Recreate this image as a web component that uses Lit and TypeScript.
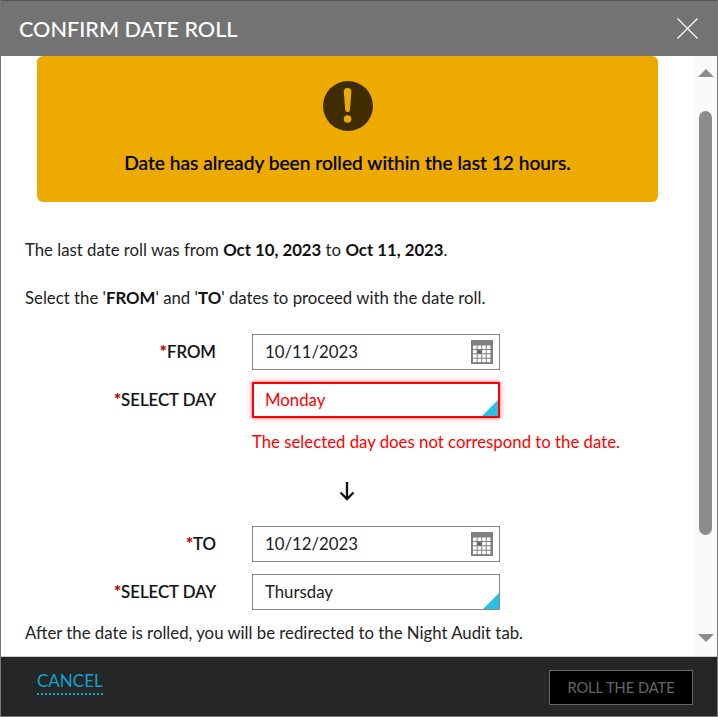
import { LitElement, html, css, svg } from "lit";
import { customElement } from "lit/decorators.js";

const calendar = html`<svg class="cal" width="22" height="24" viewBox="0 0 22 24">
  <rect width="22" height="24" fill="#808080"></rect>
  ${[0, 1, 2, 3].map((r) =>
    [0, 1, 2, 3].map(
      (c) =>
        svg`<rect x=${2 + c * 4.6} y=${5.5 + r * 4.4} width="3.6" height="3.4" fill=${r === 1 && c === 1 ? "#666" : "#fff"}></rect>`
    )
  )}
</svg>`;

@customElement("app-root")
export class AppRoot extends LitElement {
  static styles = css`
    :host {
      display: flex;
      flex-direction: column;
      width: 718px;
      height: 717px;
      box-sizing: border-box;
      font-family: Lato, sans-serif;
      font-size: 16.78px;
      color: #222;
      background: #fff;
      border-left: 1px solid #777;
      border-right: 1px solid #777;
      border-bottom: 1px solid #777;
      overflow: hidden;
    }
    .head {
      flex: none;
      height: 56px;
      box-sizing: border-box;
      border-top: 1px solid #555;
      background: #737373;
      color: #fff;
      display: flex;
      align-items: center;
      justify-content: space-between;
      padding: 0 19px 0 18px;
      font-size: 21.6px;
      font-weight: 500;
    }
    .head svg { display: block; }
    .main { flex: 1; display: flex; min-height: 0; }
    .content { flex: 1; padding: 0 0 0 24px; min-width: 0; }
    .banner {
      width: 621px;
      height: 146px;
      margin-left: 12px;
      box-sizing: border-box;
      background: #edaa00;
      border-radius: 6px;
      display: flex;
      flex-direction: column;
      align-items: center;
      padding-top: 25px;
      color: #000;
      font-size: 19.15px;
      font-weight: 500;
      -webkit-text-stroke: 0.2px #000;
    }
    .banner svg { display: block; margin-bottom: 20px; }
    p { margin: 0; line-height: 20px; white-space: nowrap; }
    .p1 { margin-top: 38px; }
    .p2 { margin-top: 28px; }
    b { font-weight: 700; color: #111; }
    .form {
      display: grid;
      grid-template-columns: 191px 248px;
      column-gap: 36px;
      row-gap: 12px;
      margin-top: 26px;
      align-items: center;
    }
    .form.to { margin-top: 25px; }
    .lbl { text-align: right; font-weight: 500; color: #111; padding-bottom: 1px; white-space: nowrap; -webkit-text-stroke: 0.2px #111; }
    .lbl i { color: #f00; font-style: normal; font-weight: 700; }
    .box {
      position: relative;
      height: 36px;
      box-sizing: border-box;
      border: 1px solid #8a8a8a;
      padding: 0 0 1px 12px;
      display: flex;
      align-items: center;
      color: #222;
      background: #fff;
    }
    .box.err { border: 2px solid #f00; padding-left: 11px; color: #f00; box-shadow: 0 0 5px rgba(255, 0, 0, 0.6); }
    .cal { position: absolute; right: 6px; top: 5px; }
    .corner {
      position: absolute;
      right: 0;
      bottom: 0;
      width: 0;
      height: 0;
      border-style: solid;
      border-width: 0 0 16px 16px;
      border-color: transparent transparent #29c0e4 transparent;
    }
    .msg { grid-column: 2; color: #f00; margin-top: 2px; line-height: 20px; white-space: nowrap; }
    .arrow { display: flex; justify-content: flex-start; margin: 29px 0 0 312px; height: 20px; }
    .p3 { margin-top: 13px; }
    .bar { flex: none; width: 23px; background: #fafafa; display: flex; flex-direction: column; align-items: center; box-sizing: border-box; }
    .up, .down { flex: none; width: 0; height: 0; border-left: 8px solid transparent; border-right: 8px solid transparent; }
    .up { border-bottom: 8px solid #8c8c8c; margin-top: 13px; }
    .thumb { flex: none; width: 13px; height: 424px; margin-top: 34px; background: #8c8c8c; border-radius: 7px; }
    .down { border-top: 8px solid #8c8c8c; margin-top: 99px; }
    .foot {
      flex: none;
      height: 60px;
      box-sizing: border-box;
      background: #262626;
      border-top: 1px solid #ccc;
      display: flex;
      align-items: center;
      justify-content: space-between;
      padding: 0 24px 0 36px;
    }
    .cancel {
      color: #0ba5cc;
      font-size: 17px;
      line-height: 20px;
      border-bottom: 2px dotted #0ba5cc;
      padding-bottom: 2px;
      margin-top: -8px;
    }
    .roll {
      width: 144px;
      height: 35px;
      box-sizing: border-box;
      background: #000;
      border: 1px solid #666;
      color: #666;
      font-size: 14.6px;
      display: flex;
      align-items: center;
      justify-content: center;
      margin-top: 2px;
    }
  `;

  render() {
    return html`
      <div class="head">
        <span>CONFIRM DATE ROLL</span>
        <svg width="21" height="21" viewBox="0 0 21 21"><path d="M.5.5l20 20M20.5.5l-20 20" stroke="#fff" stroke-width="1.2" fill="none"></path></svg>
      </div>
      <div class="main">
        <div class="content">
          <div class="banner">
            <svg width="50" height="50" viewBox="0 0 50 50">
              <circle cx="25" cy="25" r="25" fill="#3f2d00"></circle>
              <path d="M20.8 10.8a3.8 3.8 0 0 1 7.6 0l-1.4 18a2.4 2.4 0 0 1-4.8 0z" fill="#edaa00"></path>
              <circle cx="24.6" cy="38" r="3.8" fill="#edaa00"></circle>
            </svg>
            <span>Date has already been rolled within the last 12 hours.</span>
          </div>
          <p class="p1">The last date roll was from <b>Oct 10, 2023</b> to <b>Oct 11, 2023</b>.</p>
          <p class="p2">Select the '<b>FROM</b>' and '<b>TO</b>' dates to proceed with the date roll.</p>
          <div class="form">
            <div class="lbl"><i>*</i>FROM</div>
            <div class="box">10/11/2023${calendar}</div>
            <div class="lbl"><i>*</i>SELECT DAY</div>
            <div class="box err">Monday<span class="corner"></span></div>
            <div class="msg">The selected day does not correspond to the date.</div>
          </div>
          <div class="arrow">
            <svg width="20" height="20" viewBox="0 0 20 20"><path d="M10 1v17M3.5 11.5l6.5 6.5 6.5-6.5" stroke="#111" stroke-width="2.3" fill="none"></path></svg>
          </div>
          <div class="form to">
            <div class="lbl"><i>*</i>TO</div>
            <div class="box">10/12/2023${calendar}</div>
            <div class="lbl"><i>*</i>SELECT DAY</div>
            <div class="box">Thursday<span class="corner"></span></div>
          </div>
          <p class="p3">After the date is rolled, you will be redirected to the Night Audit tab.</p>
        </div>
        <div class="bar">
          <div class="up"></div>
          <div class="thumb"></div>
          <div class="down"></div>
        </div>
      </div>
      <div class="foot">
        <span class="cancel">CANCEL</span>
        <span class="roll">ROLL THE DATE</span>
      </div>
    `;
  }
}
